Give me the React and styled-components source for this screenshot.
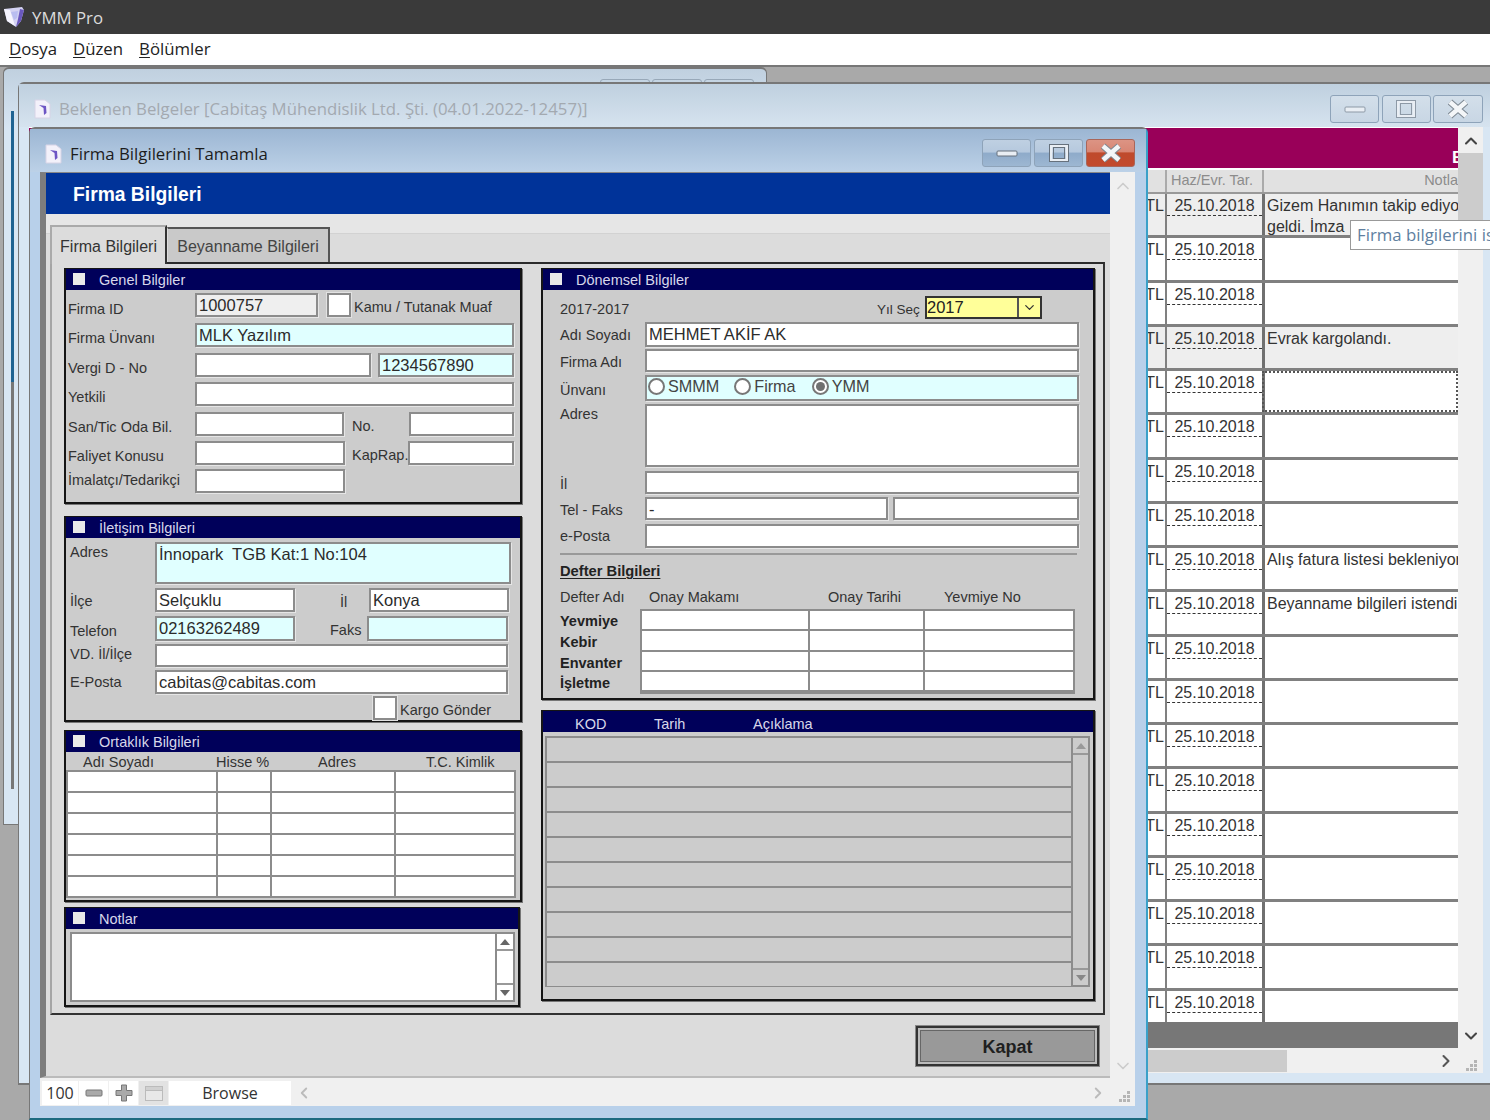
import React from "react";
import styled, { createGlobalStyle } from "styled-components";
import { ChevronUp, ChevronDown, ChevronLeft, ChevronRight } from "lucide-react";

const GlobalStyle = createGlobalStyle`
  html, body { margin: 0; padding: 0; background: #a9a9a9; }
  * { box-sizing: border-box; }
`;

const ui = `"Open Sans", "Noto Sans", sans-serif`;
const arial = `"Liberation Sans", Arial, sans-serif`;

const Page = styled.div`
  width: 1490px;
  height: 1120px;
  display: flex;
  flex-direction: column;
  overflow: hidden;
  font-family: ${arial};
`;

const AppBar = styled.div`
  height: 34px;
  background: #3a3a3a;
  color: #dcdcdc;
  font: 16.8px ${ui};
  display: flex;
  align-items: center;
  gap: 7px;
  padding-left: 3px;
`;

const MenuBar = styled.div`
  height: 31px;
  background: #fff;
  color: #222;
  font: 16.8px ${ui};
  display: flex;
  align-items: center;
  gap: 16px;
  padding: 0 0 2px 9px;
  u { text-underline-offset: 2px; }
`;

const Desktop = styled.div`
  flex: 1;
  position: relative;
  background: #a9a9a9;
  border-top: 2px solid #777;
`;

/* pencereler serbest masaustunde duruyor */
const BackWindow = styled.div`
  position: absolute;
  left: 3px;
  top: 0;
  width: 764px;
  height: 758px;
  background: linear-gradient(#c0d0df 0, #d8e6f3 60px);
  border: 1px solid #777;
  border-top-width: 2px;
  border-radius: 6px 6px 0 0;
  display: flex;
  justify-content: flex-end;
  padding: 10px 12px 0 0;
  gap: 2px;
`;

const BackEdge = styled.div`
  position: absolute;
  left: 11px;
  top: 44px;
  width: 3px;
  height: 678px;
  background: linear-gradient(#1f6392 0, #1f6392 40%, #777 40%);
`;

const BackStub = styled.div`
  width: 50px;
  height: 26px;
  border: 1px solid #98a8b8;
  border-radius: 3px;
`;

const DocsWindow = styled.div`
  position: absolute;
  left: 18px;
  top: 15px;
  width: 1472px;
  height: 1003px;
  background: #d8e6f3;
  border-top: 2px solid #777;
  border-left: 1px solid #777;
  border-bottom: 2px solid #777;
  border-radius: 6px 0 0 0;
  display: flex;
  flex-direction: column;
  padding: 0 7px 10px 0;
`;

const DocsTitle = styled.div`
  height: 43px;
  flex: none;
  margin-right: -7px;
  background: linear-gradient(#bfd0df, #d6e3ef);
  display: flex;
  align-items: center;
  padding: 6px 7px 0 15px;
  color: #a3a9b0;
  font: 16.8px ${ui};
`;

const TitleText = styled.span`
  margin-left: 8px;
  flex: 1;
`;

const WinButtons = styled.div`
  display: flex;
  gap: ${(p) => p.$gap || 3}px;
  align-self: flex-start;
  margin-top: ${(p) => p.$mt || 5}px;
`;

const WinButton = styled.div`
  width: ${(p) => p.$w || 49}px;
  height: 28px;
  border-radius: 3px;
  border: 1px solid ${(p) => (p.$close ? "#a9665a" : "#8ea3b9")};
  display: flex;
  align-items: center;
  justify-content: center;
  background: ${(p) =>
    p.$close
      ? "linear-gradient(#dc9484 0, #d88674 45%, #bf4a2c 50%, #c24a2e 100%)"
      : p.$dim
      ? "linear-gradient(#d3dfea, #c8d6e4)"
      : "linear-gradient(#bfd0e2 0, #b6c9de 45%, #8fabca 52%, #9db7d2 100%)"};
`;

const DocsBody = styled.div`
  flex: 1;
  display: flex;
  min-height: 0;
`;

const DocsSheet = styled.div`
  flex: 1;
  display: flex;
  flex-direction: column;
  align-items: flex-end;
  min-width: 0;
  margin-left: 10px;
  padding-top: 1px;
  background: #fff;
`;

const Plum = styled.div`
  width: 100%;
  height: 40px;
  flex: none;
  background: #990059;
  color: #fff;
  font: bold 17px ${arial};
  text-align: right;
  overflow: hidden;
  padding-top: 20px;
  white-space: nowrap;
  span { display: inline-block; width: 6px; overflow: hidden; }
`;

const SheetHead = styled.div`
  width: 353px;
  height: 24px;
  margin-top: 2px;
  flex: none;
  display: grid;
  grid-template-columns: 60px 97px 196px;
  background: #e1e1e1;
  border-bottom: 2px solid #999;
  color: #8c8c8c;
  font-size: 14.5px;
  line-height: 21px;
`;

const HeadCell = styled.div`
  border-left: 2px solid #aaa;
  padding: 0 ${(p) => (p.$align ? 0 : 4)}px 0 4px;
  text-align: ${(p) => p.$align || "left"};
  overflow: hidden;
  white-space: nowrap;
`;

const SheetRows = styled.div`
  width: 353px;
  flex: 1;
  min-height: 0;
  overflow: hidden;
`;

const SheetRow = styled.div`
  height: 44.25px;
  display: grid;
  grid-template-columns: 60px 97px 196px;
  background: ${(p) => (p.$shade ? "#eeeeee" : "#fff")};
  border-bottom: 3px solid #808080;
  color: #333;
  font-size: 16px;
`;

const CurrencyCell = styled.div`
  text-align: right;
  padding: 3px 1px 0 0;
`;

const DateCell = styled.div`
  border-left: 2px solid #808080;
  padding-top: 3px;
  span {
    display: block;
    height: 19px;
    line-height: 17px;
    text-align: center;
    border-bottom: 1px dashed #333;
  }
`;

const NoteCell = styled.div`
  border-left: 3px solid #707070;
  padding: 1px 0 0 2px;
  line-height: 21px;
  white-space: nowrap;
  overflow: hidden;
  ${(p) => p.$focus && "outline: 2px dotted #555; outline-offset: -2px;"}
`;

const DeadBar = styled.div`
  width: 100%;
  height: 26px;
  flex: none;
  background: #777;
`;

const HBar = styled.div`
  width: 100%;
  height: 25px;
  flex: none;
  background: #f0f0f0;
  display: flex;
  align-items: center;
  padding-right: 2px;
`;

const HThumb = styled.div`
  width: 139px;
  height: 22px;
  margin-right: auto;
  margin-left: 1119px;
  background: #ccc;
`;

const VBar = styled.div`
  width: ${(p) => p.$w || 25}px;
  flex: none;
  background: #f0f0f0;
  display: flex;
  flex-direction: column;
  align-items: center;
  justify-content: space-between;
  padding: 4px 0 2px;
  color: ${(p) => p.$color || "#444"};
`;

const VThumb = styled.div`
  width: 100%;
  flex: 1;
  margin: 2px 0 4px;
  background: linear-gradient(#ccc 0, #ccc 72px, #f0f0f0 72px);
`;

const Tooltip = styled.div`
  position: absolute;
  left: 1350px;
  top: 153px;
  width: 140px;
  height: 30px;
  background: #fff;
  border: 1px solid #999;
  border-right: 0;
  color: #5f7f9f;
  font: 16.8px ${ui};
  padding: 2px 0 0 6px;
  white-space: nowrap;
  overflow: hidden;
`;

const FormWindow = styled.div`
  position: absolute;
  left: 29px;
  top: 60px;
  width: 1119px;
  height: 993px;
  background: #b8d0ea;
  border-top: 2px solid #777;
  border-left: 1px solid #777;
  border-right: 2px solid #3aa0c8;
  border-bottom: 2px solid #1c6a80;
  border-radius: 6px 6px 0 0;
  display: flex;
  flex-direction: column;
  padding: 0 11px 12px 10px;
`;

const FormTitle = styled.div`
  height: 43px;
  flex: none;
  margin: 0 -11px 0 -10px;
  background: linear-gradient(#9cb6d3, #bcd1e7);
  display: flex;
  align-items: center;
  padding: 6px 11px 0 15px;
  color: #1c1c1c;
  font: 16.8px ${ui};
`;

const FormClient = styled.div`
  flex: 1;
  display: flex;
  flex-direction: column;
  min-height: 0;
`;

const FormMain = styled.div`
  flex: 1;
  display: flex;
  min-height: 0;
`;

const ScrollArea = styled.div`
  flex: 1;
  min-width: 0;
  display: flex;
  flex-direction: column;
  background: #dcdcdc;
  border-left: 6px solid #7d7d7d;
  border-top: 1px solid #888;
  border-bottom: 2px solid #bbb;
`;

const BlueHead = styled.div`
  height: 41px;
  flex: none;
  background: #003399;
  color: #fff;
  font: bold 19.3px ${arial};
  line-height: 44px;
  padding-left: 27px;
`;

const TabStrip = styled.div`
  height: 48px;
  flex: none;
  display: flex;
  align-items: flex-end;
  padding-left: 4px;
  background: linear-gradient(#e6e6e6 0, #e6e6e6 19px, #d2d2d2 19px, #d2d2d2 20px, #dcdcdc 20px);
`;

const Tab = styled.div`
  position: relative;
  z-index: 1;
  font-size: 16px;
  color: ${(p) => (p.$active ? "#333" : "#444")};
  background: ${(p) => (p.$active ? "#dcdcdc" : "#c9c9c9")};
  width: ${(p) => p.$w}px;
  height: ${(p) => (p.$active ? 39 : 35)}px;
  margin-bottom: ${(p) => (p.$active ? -2 : 0)}px;
  border-style: solid;
  border-color: ${(p) => (p.$active ? "#aaa #333 transparent #aaa" : "#555 #555 transparent #ddd")};
  border-width: 2px 2px 0 ${(p) => (p.$active ? 2 : 1)}px;
  text-align: center;
  line-height: ${(p) => (p.$active ? 39 : 35)}px;
`;

const TabPanel = styled.div`
  height: 753px;
  flex: none;
  margin: 0 5px 0 4px;
  border-top: 2px solid #2b2b2b;
  border-right: 2px solid #333;
  border-bottom: 2px solid #333;
  border-left: 2px solid #a5a5a5;
  padding: 4px 0 0 12px;
  display: flex;
  gap: 19px;
`;

const Column = styled.div`
  width: ${(p) => p.$w}px;
  display: flex;
  flex-direction: column;
`;

const Panel = styled.section`
  height: ${(p) => p.$h}px;
  width: ${(p) => p.$w || "100%"};
  margin-top: ${(p) => p.$mt || 0}px;
  flex: none;
  background: #ccc;
  border: 2px solid #151515;
  border-top-width: 1px;
  box-shadow: 1px 1px 0 #777;
`;

const PanelHead = styled.header`
  height: 21px;
  background: #00005a;
  color: #d7d7ea;
  font-size: 14.5px;
  line-height: 23px;
  display: flex;
  padding-left: ${(p) => p.$pl || 7}px;
`;

const HeadBox = styled.span`
  width: 12px;
  height: 12px;
  margin-top: 4px;
  margin-right: 14px;
  background: #e9e9e9;
  flex: none;
`;

const PanelBody = styled.div`
  padding-left: ${(p) => p.$pl || 0}px;
`;

const Row = styled.div`
  display: flex;
  align-items: ${(p) => (p.$top ? "flex-start" : "center")};
  height: ${(p) => p.$h || 24}px;
  margin-top: ${(p) => p.$mt ?? 5}px;
`;

// $n: yaziyi satir icinde kac piksel kaydiracagi
const Label = styled.div`
  width: ${(p) => p.$w}px;
  padding-left: ${(p) => p.$pl || 0}px;
  padding-top: ${(p) => (p.$top ? 2 : Math.max(0, 3 + 2 * (p.$n || 0)))}px;
  padding-bottom: ${(p) => (p.$top ? 0 : Math.max(0, -(3 + 2 * (p.$n || 0))))}px;
  flex: none;
  color: #333;
  font-size: ${(p) => p.$size || 14.5}px;
  white-space: nowrap;
`;

const Field = styled.div`
  width: ${(p) => p.$w}px;
  margin-left: ${(p) => p.$ml || 0}px;
  height: 100%;
  flex: none;
  background: ${(p) => p.$bg || "#fff"};
  border: 2px solid #8c8c8c;
  box-shadow: 1px 1px 0 #e6e6e6;
  color: #2b2b2b;
  font-size: 16.5px;
  line-height: ${(p) => (p.$multi ? 20 : 21)}px;
  padding: 0 2px;
  white-space: pre;
  overflow: hidden;
`;

const CheckFrame = styled.div`
  width: 24px;
  height: 100%;
  flex: none;
  margin-left: ${(p) => p.$ml || 0}px;
  margin-right: ${(p) => p.$mr || 3}px;
  background: #fff;
  border: 2px solid #8c8c8c;
  box-shadow: 0 0 0 1px #e2e2e2;
`;

const CheckText = styled.span`
  color: #333;
  font-size: 14.5px;
  padding-top: 3px;
`;

const RadioRow = styled.div`
  display: flex;
  align-items: center;
  height: 19px;
  margin-left: -1px;
  font-size: 16.2px;
  color: #444;
`;

const Radio = styled.span`
  width: 17px;
  height: 17px;
  border-radius: 50%;
  flex: none;
  margin: 0 3px 0 ${(p) => p.$ml || 0}px;
  border: 2px solid #777;
  background: #fff;
  display: flex;
  align-items: center;
  justify-content: center;
  &::after {
    content: "";
    width: 9px;
    height: 9px;
    border-radius: 50%;
    background: ${(p) => (p.$on ? "#707070" : "transparent")};
  }
`;

const Combo = styled.div`
  width: 117px;
  height: 100%;
  flex: none;
  margin-left: 7px;
  display: flex;
  background: #ffff99;
  border: 2px solid #333;
  font-size: 16.5px;
  line-height: 18px;
  color: #222;
`;

const ComboText = styled.span`
  flex: 1;
`;

const ComboArrow = styled.span`
  width: 23px;
  border-left: 2px solid #555;
  display: flex;
  align-items: center;
  justify-content: center;
`;

const Rule = styled.div`
  margin: 5px 16px 0 0;
  border-top: 2px solid #999;
`;

const SectionTitle = styled.div`
  margin-top: 8px;
  font: bold 14.7px ${arial};
  color: #222;
  text-decoration: underline;
  text-underline-offset: 2px;
`;

const ColHeads = styled.div`
  display: grid;
  grid-template-columns: ${(p) => p.$cols};
  height: ${(p) => p.$h}px;
  margin-top: ${(p) => p.$mt || 0}px;
  padding-left: ${(p) => p.$pl || 0}px;
  color: ${(p) => p.$color || "#333"};
  font-size: 14.5px;
  line-height: ${(p) => p.$h}px;
`;

const LedgerWrap = styled.div`
  display: flex;
  margin-top: 3px;
`;

const LedgerNames = styled.div`
  width: 80px;
  flex: none;
  display: grid;
  grid-auto-rows: 20.75px;
  padding-top: 2px;
  font: bold 14.5px ${arial};
  color: #222;
  line-height: 21px;
`;

const CellGrid = styled.div`
  display: grid;
  grid-template-columns: ${(p) => p.$cols};
  grid-auto-rows: ${(p) => p.$row};
  gap: 2px;
  padding: 2px;
  width: ${(p) => p.$w}px;
  margin: ${(p) => p.$m || 0};
  background: #8c8c8c;
`;

const Cell = styled.div`
  background: ${(p) => p.$bg || "#fff"};
`;

const NotesBox = styled.div`
  display: flex;
  width: 445px;
  height: 70px;
  margin: 3px 0 0 4px;
  background: #fff;
  border: 2px solid #8c8c8c;
`;

const NotesFill = styled.div`
  flex: 1;
`;

const MiniScroll = styled.div`
  width: ${(p) => p.$w}px;
  flex: none;
  display: flex;
  flex-direction: column;
  justify-content: space-between;
  background: ${(p) => p.$bg || "#fff"};
  border-left: 2px solid #8c8c8c;
  ${(p) => p.$boxed && "border: 2px solid #8c8c8c; border-left: 0;"}
`;

const MiniArrow = styled.div`
  height: 17px;
  border-${(p) => (p.$down ? "top" : "bottom")}: 2px solid #999;
  display: flex;
  align-items: center;
  justify-content: center;
  &::after {
    content: "";
    border-left: 5px solid transparent;
    border-right: 5px solid transparent;
    ${(p) => (p.$down ? "border-top" : "border-bottom")}: 6px solid ${(p) => p.$color || "#666"};
  }
`;

const ListWrap = styled.div`
  display: flex;
  margin: 4px 0 0 2px;
  height: 251px;
`;

const Footer = styled.div`
  flex: 1;
  display: flex;
  justify-content: flex-end;
  align-items: flex-start;
  padding: 11px 11px 0 0;
`;

const CloseButton = styled.div`
  width: 183px;
  height: 40px;
  background: #999;
  border: 2px solid #333;
  outline: 1px solid #888;
  box-shadow: inset 0 0 0 2px #bbb, inset 0 0 0 3px #666;
  color: #1f1f1f;
  font: bold 18px ${arial};
  text-align: center;
  line-height: 38px;
`;

const StatusBar = styled.div`
  height: 28px;
  flex: none;
  background: #f0f0f0;
  display: flex;
  align-items: flex-start;
  padding: 3px 5px 0 2px;
  gap: 1px;
  color: #333;
  font: 16px ${ui};
`;

const StatusBox = styled.div`
  width: ${(p) => p.$w}px;
  height: 24px;
  flex: none;
  background: ${(p) => p.$bg || "#fff"};
  display: flex;
  align-items: center;
  justify-content: center;
`;

const StatusRest = styled.div`
  flex: 1;
  display: flex;
  align-items: center;
  justify-content: space-between;
  height: 24px;
  padding: 0 10px 0 3px;
  color: #bbb;
`;

const Grip = styled.svg`
  flex: none;
  margin-top: ${(p) => p.$mt || 0}px;
`;

const currencyDates = Array.from({ length: 19 }, (_, i) => i);

const notes = {
  0: ["Gizem Hanımın takip ediyor", "geldi. İmza"],
  3: ["Evrak kargolandı."],
  8: ["Alış fatura listesi bekleniyor"],
  9: ["Beyanname bilgileri istendi"],
};

function AppLogo() {
  return (
    <svg width="22" height="22" viewBox="0 0 22 22">
      <path d="M1 3 L19 1 L21 4 L18 15 L13 21 L4 15 Z" fill="#d4d3f2" />
      <path d="M17 3 L21 4 L18 15 L13 21 L15 13 Z" fill="#6a58bd" />
      <path d="M1 3 L7 4 L12 20 L4 15 Z" fill="#f6f5fd" />
      <path d="M8 6 L15 5 L14 12 L11 14 Z" fill="#b9bdf0" />
    </svg>
  );
}

function DocIcon() {
  return (
    <svg width="17" height="20" viewBox="0 0 17 20" style={{ flex: "none" }}>
      <path d="M1 1 H11 L16 5 V19 H1 Z" fill="#f3f1fa" stroke="#d7d4e6" />
      <path d="M5 6 L12 7 L12.5 14 L10 16 L9.5 9 Z" fill="#6d55c4" />
    </svg>
  );
}

function MinIcon({ dim }) {
  return (
    <svg width="22" height="10" viewBox="0 0 22 10">
      <rect x="1" y="3" width="20" height="5" rx="1" fill="#e9eef4" stroke={dim ? "#8d99a6" : "#66717d"} />
    </svg>
  );
}

function MaxIcon({ dim }) {
  return (
    <svg width="20" height="18" viewBox="0 0 20 18">
      <rect x="2" y="1.5" width="16" height="15" fill="none" stroke="#e9eef4" strokeWidth="3" />
      <rect x="0.5" y="0.5" width="19" height="17" fill="none" stroke={dim ? "#8d99a6" : "#66717d"} />
      <rect x="4.5" y="3.5" width="11" height="11" fill="none" stroke={dim ? "#8d99a6" : "#66717d"} />
    </svg>
  );
}

function CloseIcon() {
  return (
    <svg width="24" height="20" viewBox="0 0 24 20">
      <path d="M4 3 L20 17 M20 3 L4 17" stroke="#7c8791" strokeWidth="6.5" />
      <path d="M4 3 L20 17 M20 3 L4 17" stroke="#f4f6f8" strokeWidth="4.5" />
    </svg>
  );
}

function ResizeGrip({ mt }) {
  return (
    <Grip $mt={mt} width="12" height="12" viewBox="0 0 12 12" fill="#b5b5b5">
      <rect x="9" y="1" width="3" height="3" />
      <rect x="5" y="5" width="3" height="3" />
      <rect x="9" y="5" width="3" height="3" />
      <rect x="1" y="9" width="3" height="3" />
      <rect x="5" y="9" width="3" height="3" />
      <rect x="9" y="9" width="3" height="3" />
    </Grip>
  );
}

function PanelTitle({ children }) {
  return (
    <PanelHead>
      <HeadBox />
      {children}
    </PanelHead>
  );
}

function GenelPanel() {
  return (
    <Panel $h={236}>
      <PanelTitle>Genel Bilgiler</PanelTitle>
      <PanelBody $pl={2}>
        <Row $mt={3}>
          <Label $w={127} $n={2}>Firma ID</Label>
          <Field $w={123} $bg="#efefef">1000757</Field>
          <CheckFrame $ml={9} $mr={3} />
          <CheckText>Kamu / Tutanak Muaf</CheckText>
        </Row>
        <Row $mt={6}>
          <Label $w={127} $n={1}>Firma Ünvanı</Label>
          <Field $w={319} $bg="#e0ffff">MLK Yazılım</Field>
        </Row>
        <Row $mt={6}>
          <Label $w={127} $n={1}>Vergi D - No</Label>
          <Field $w={176} />
          <Field $w={136} $ml={7} $bg="#e0ffff">1234567890</Field>
        </Row>
        <Row>
          <Label $w={127} $n={1}>Yetkili</Label>
          <Field $w={319} />
        </Row>
        <Row $mt={6}>
          <Label $w={127} $n={1}>San/Tic Oda Bil.</Label>
          <Field $w={149} />
          <Label $w={65} $pl={8}>No.</Label>
          <Field $w={105} />
        </Row>
        <Row>
          <Label $w={127} $n={1}>Faliyet Konusu</Label>
          <Field $w={150} />
          <Label $w={63} $pl={7}>KapRap.</Label>
          <Field $w={106} />
        </Row>
        <Row $mt={4}>
          <Label $w={127} $n={-3}>İmalatçı/Tedarikçi</Label>
          <Field $w={150} />
        </Row>
      </PanelBody>
    </Panel>
  );
}

function IletisimPanel() {
  return (
    <Panel $h={206} $mt={12}>
      <PanelTitle>İletişim Bilgileri</PanelTitle>
      <PanelBody $pl={4}>
        <Row $h={42} $mt={4} $top>
          <Label $w={85} $top>Adres</Label>
          <Field $w={356} $bg="#e0ffff" $multi>{"İnnopark  TGB Kat:1 No:104"}</Field>
        </Row>
        <Row $mt={4}>
          <Label $w={85} $n={-1}>İlçe</Label>
          <Field $w={140}>Selçuklu</Field>
          <Label $w={74} $pl={45}>İl</Label>
          <Field $w={140}>Konya</Field>
        </Row>
        <Row $h={25} $mt={4}>
          <Label $w={85} $n={1}>Telefon</Label>
          <Field $w={140} $bg="#e0ffff">02163262489</Field>
          <Label $w={72} $pl={35}>Faks</Label>
          <Field $w={141} $bg="#e0ffff" />
        </Row>
        <Row $h={23} $mt={3}>
          <Label $w={85} $n={-3}>VD. İl/İlçe</Label>
          <Field $w={353} />
        </Row>
        <Row $mt={3}>
          <Label $w={85} $n={-2}>E-Posta</Label>
          <Field $w={353}>cabitas@cabitas.com</Field>
        </Row>
        <Row $mt={2}>
          <Label $w={303} />
          <CheckFrame />
          <CheckText>Kargo Gönder</CheckText>
        </Row>
      </PanelBody>
    </Panel>
  );
}

function OrtaklikPanel() {
  return (
    <Panel $h={172} $mt={8}>
      <PanelTitle>Ortaklık Bilgileri</PanelTitle>
      <ColHeads $cols="133px 102px 108px 1fr" $h={20} $pl={17}>
        <span>Adı Soyadı</span>
        <span>Hisse %</span>
        <span>Adres</span>
        <span>T.C. Kimlik</span>
      </ColHeads>
      <CellGrid $cols="148px 52px 122px 1fr" $row="19px" $w={450} $m="-2px 0 0 0">
        {Array.from({ length: 24 }, (_, i) => (
          <Cell key={i} />
        ))}
      </CellGrid>
    </Panel>
  );
}

function NotlarPanel() {
  return (
    <Panel $h={100} $mt={5} $w="456px">
      <PanelTitle>Notlar</PanelTitle>
      <NotesBox>
        <NotesFill />
        <MiniScroll $w={18}>
          <MiniArrow />
          <MiniArrow $down />
        </MiniScroll>
      </NotesBox>
    </Panel>
  );
}

function DonemselPanel() {
  return (
    <Panel $h={432}>
      <PanelTitle>Dönemsel Bilgiler</PanelTitle>
      <PanelBody $pl={17}>
        <Row $h={23} $mt={6}>
          <Label $w={317}>2017-2017</Label>
          <Label $w={41} $size={13.5}>Yıl Seç</Label>
          <Combo>
            <ComboText>2017</ComboText>
            <ComboArrow>
              <ChevronDown size={15} color="#333" />
            </ComboArrow>
          </Combo>
        </Row>
        <Row $h={25} $mt={3}>
          <Label $w={85} $n={-1}>Adı Soyadı</Label>
          <Field $w={434}>MEHMET AKİF AK</Field>
        </Row>
        <Row $h={23} $mt={2}>
          <Label $w={85}>Firma Adı</Label>
          <Field $w={434} />
        </Row>
        <Row $h={26} $mt={3}>
          <Label $w={85}>Ünvanı</Label>
          <Field $w={434} $bg="#e0ffff">
            <RadioRow>
              <Radio />SMMM
              <Radio $ml={15} />Firma
              <Radio $ml={16} $on />YMM
            </RadioRow>
          </Field>
        </Row>
        <Row $h={63} $mt={3} $top>
          <Label $w={85} $top>Adres</Label>
          <Field $w={434} />
        </Row>
        <Row $h={23} $mt={4}>
          <Label $w={85}>İl</Label>
          <Field $w={434} />
        </Row>
        <Row $h={23} $mt={3}>
          <Label $w={85}>Tel - Faks</Label>
          <Field $w={243}>-</Field>
          <Field $w={186} $ml={5} />
        </Row>
        <Row $mt={4}>
          <Label $w={85} $n={-2}>e-Posta</Label>
          <Field $w={434} />
        </Row>
        <Rule />
        <SectionTitle>Defter Bilgileri</SectionTitle>
        <ColHeads $cols="89px 179px 116px 1fr" $h={17} $mt={10}>
          <span>Defter Adı</span>
          <span>Onay Makamı</span>
          <span>Onay Tarihi</span>
          <span>Yevmiye No</span>
        </ColHeads>
        <LedgerWrap>
          <LedgerNames>
            <span>Yevmiye</span>
            <span>Kebir</span>
            <span>Envanter</span>
            <span>İşletme</span>
          </LedgerNames>
          <CellGrid $cols="166px 113px 1fr" $row="18.25px" $w={435}>
            {Array.from({ length: 12 }, (_, i) => (
              <Cell key={i} />
            ))}
          </CellGrid>
        </LedgerWrap>
      </PanelBody>
    </Panel>
  );
}

function KodPanel() {
  return (
    <Panel $h={291} $mt={10}>
      <PanelHead>
        <ColHeads $cols="79px 99px 1fr" $h={26} $pl={25} $color="#d7d7ea">
          <span>KOD</span>
          <span>Tarih</span>
          <span>Açıklama</span>
        </ColHeads>
      </PanelHead>
      <ListWrap>
        <CellGrid $cols="1fr" $row="23px" $w={528}>
          {Array.from({ length: 10 }, (_, i) => (
            <Cell key={i} $bg="#cccccc" />
          ))}
        </CellGrid>
        <MiniScroll $w={17} $bg="#cccccc" $boxed>
          <MiniArrow $color="#999" />
          <MiniArrow $down $color="#888" />
        </MiniScroll>
      </ListWrap>
    </Panel>
  );
}

export default function App() {
  return (
    <>
      <GlobalStyle />
      <Page>
        <AppBar>
          <AppLogo />
          YMM Pro
        </AppBar>
        <MenuBar>
          <span><u>D</u>osya</span>
          <span><u>D</u>üzen</span>
          <span><u>B</u>ölümler</span>
        </MenuBar>
        <Desktop>
          <BackWindow>
            <BackStub />
            <BackStub />
            <BackStub />
          </BackWindow>
          <BackEdge />

          <DocsWindow>
            <DocsTitle>
              <DocIcon />
              <TitleText>Beklenen Belgeler [Cabitaş Mühendislik Ltd. Şti. (04.01.2022-12457)]</TitleText>
              <WinButtons $gap={2.5}>
                <WinButton $dim><MinIcon dim /></WinButton>
                <WinButton $dim><MaxIcon dim /></WinButton>
                <WinButton $dim $w={50}><CloseIcon /></WinButton>
              </WinButtons>
            </DocsTitle>
            <DocsBody>
              <DocsSheet>
                <Plum><span>E</span></Plum>
                <SheetHead>
                  <HeadCell />
                  <HeadCell>Haz/Evr. Tar.</HeadCell>
                  <HeadCell $align="right">Notla</HeadCell>
                </SheetHead>
                <SheetRows>
                  {currencyDates.map((i) => (
                    <SheetRow key={i} $shade={i === 0 || i === 3}>
                      <CurrencyCell>TL</CurrencyCell>
                      <DateCell><span>25.10.2018</span></DateCell>
                      <NoteCell $focus={i === 4}>
                        {(notes[i] || []).map((line) => (
                          <div key={line}>{line}</div>
                        ))}
                      </NoteCell>
                    </SheetRow>
                  ))}
                </SheetRows>
                <DeadBar />
                <HBar>
                  <HThumb />
                  <ChevronRight size={20} color="#555" strokeWidth={2.5} />
                </HBar>
              </DocsSheet>
              <VBar>
                <ChevronUp size={20} strokeWidth={2.5} />
                <VThumb />
                <ChevronDown size={20} strokeWidth={2.5} />
                <ResizeGrip mt={13} />
              </VBar>
            </DocsBody>
          </DocsWindow>

          <Tooltip>Firma bilgilerini isteyin</Tooltip>

          <FormWindow>
            <FormTitle>
              <DocIcon />
              <TitleText>Firma Bilgilerini Tamamla</TitleText>
              <WinButtons $mt={4}>
                <WinButton><MinIcon /></WinButton>
                <WinButton><MaxIcon /></WinButton>
                <WinButton $close><CloseIcon /></WinButton>
              </WinButtons>
            </FormTitle>
            <FormClient>
              <FormMain>
                <ScrollArea>
                  <BlueHead>Firma Bilgileri</BlueHead>
                  <TabStrip>
                    <Tab $active $w={117}>Firma Bilgileri</Tab>
                    <Tab $w={163}>Beyanname Bilgileri</Tab>
                  </TabStrip>
                  <TabPanel>
                    <Column $w={458}>
                      <GenelPanel />
                      <IletisimPanel />
                      <OrtaklikPanel />
                      <NotlarPanel />
                    </Column>
                    <Column $w={554}>
                      <DonemselPanel />
                      <KodPanel />
                    </Column>
                  </TabPanel>
                  <Footer>
                    <CloseButton>Kapat</CloseButton>
                  </Footer>
                </ScrollArea>
                <VBar $color="#ccc">
                  <ChevronUp size={20} />
                  <ChevronDown size={20} />
                </VBar>
              </FormMain>
              <StatusBar>
                <StatusBox $w={36}>100</StatusBox>
                <StatusBox $w={29}>
                  <svg width="18" height="8" viewBox="0 0 18 8">
                    <rect x="1" y="1" width="16" height="6" rx="1" fill="#aaa" stroke="#777" />
                  </svg>
                </StatusBox>
                <StatusBox $w={29}>
                  <svg width="18" height="18" viewBox="0 0 18 18">
                    <path d="M6.5 1 H11.5 V6.5 H17 V11.5 H11.5 V17 H6.5 V11.5 H1 V6.5 H6.5 Z" fill="#aaa" stroke="#777" />
                  </svg>
                </StatusBox>
                <StatusBox $w={29} $bg="#e2e2e2">
                  <svg width="18" height="15" viewBox="0 0 18 15">
                    <rect x="0.5" y="0.5" width="17" height="14" fill="#e8e8e8" stroke="#bbb" />
                    <rect x="0.5" y="0.5" width="17" height="4" fill="#d0d0d0" stroke="#bbb" />
                  </svg>
                </StatusBox>
                <StatusBox $w={122}>Browse</StatusBox>
                <StatusRest>
                  <ChevronLeft size={18} strokeWidth={2.5} />
                  <ChevronRight size={18} strokeWidth={2.5} />
                </StatusRest>
                <ResizeGrip mt={9} />
              </StatusBar>
            </FormClient>
          </FormWindow>
        </Desktop>
      </Page>
    </>
  );
}
